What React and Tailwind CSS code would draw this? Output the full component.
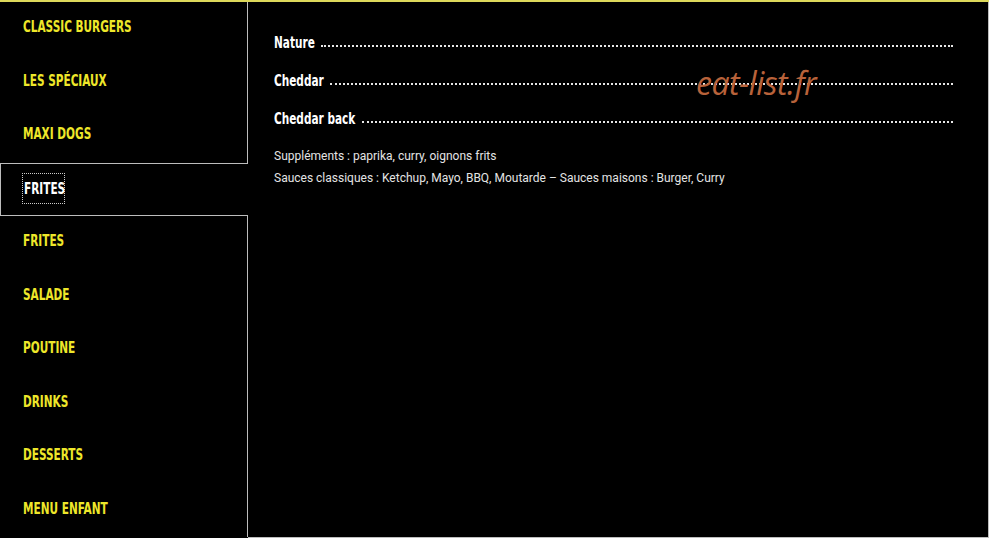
const categories = [
  "CLASSIC BURGERS",
  "LES SPÉCIAUX",
  "MAXI DOGS",
  "FRITES",
  "FRITES",
  "SALADE",
  "POUTINE",
  "DRINKS",
  "DESSERTS",
  "MENU ENFANT",
];

const items = [
  { name: "Nature", w: 39 },
  { name: "Cheddar", w: 48 },
  { name: "Cheddar back", w: 80 },
];

const display = { fontFamily: '"DejaVu Sans Condensed", "Liberation Sans", sans-serif' };

// condensed label: narrow the glyphs, keep the box at the visual width
const Cond = ({ children, className = "", w }) => (
  <span className={`inline-block leading-none whitespace-nowrap ${className}`} style={w ? { width: w } : undefined}>
    <span style={display} className="inline-block origin-left scale-x-[0.78] font-bold">
      {children}
    </span>
  </span>
);

export default function App() {
  return (
    <div className="w-[989px] h-[538px] bg-black border-t-2 border-[#dcd85a] flex overflow-hidden relative">
      <nav className="w-[248px] flex flex-col">
        {categories.map((c, i) => {
          const active = i === 3;
          return (
            <div
              key={i}
              className={`h-[53.5px] flex items-center pl-[23px] ${
                active ? "border-y border-l border-[#bdbdbd]" : "border-r border-[#bdbdbd]"
              }`}
            >
              {active ? (
                <span className="inline-block leading-none -ml-[1px] px-[1px] py-[6px] -mt-[1px] outline outline-1 outline-dotted outline-white/80">
                  <Cond w={39} className="text-[15px] text-white">
                    {c}
                  </Cond>
                </span>
              ) : (
                <Cond className="text-[15px] text-[#eee72a] -mt-[3px]">{c}</Cond>
              )}
            </div>
          );
        })}
      </nav>

      <main className="flex-1 border-r border-b border-[#bdbdbd] pl-[26px] pr-[35px] pt-[33px]">
        <div className="flex flex-col gap-[22px]">
          {items.map((it) => (
            <div key={it.name} className="flex items-end gap-[8px] h-[16px]">
              <Cond w={it.w} className="text-white text-[15px]">
                {it.name}
              </Cond>
              <span className="flex-1 border-b-2 border-dotted border-white/90 mb-[4px]" />
            </div>
          ))}
        </div>
        <div className="mt-[21px] flex flex-col gap-[6px] text-[12px] leading-[16px] text-[#e4e4e4] font-['Roboto',sans-serif]">
          <p>Suppléments : paprika, curry, oignons frits</p>
          <p>Sauces classiques : Ketchup, Mayo, BBQ, Moutarde – Sauces maisons : Burger, Curry</p>
        </div>
      </main>

      <div className="absolute left-[696px] top-[65px] text-[32px] italic text-[#b8623a] font-['Open_Sans',sans-serif] leading-none tracking-[-0.5px]">
        eat-list.fr
      </div>
    </div>
  );
}
